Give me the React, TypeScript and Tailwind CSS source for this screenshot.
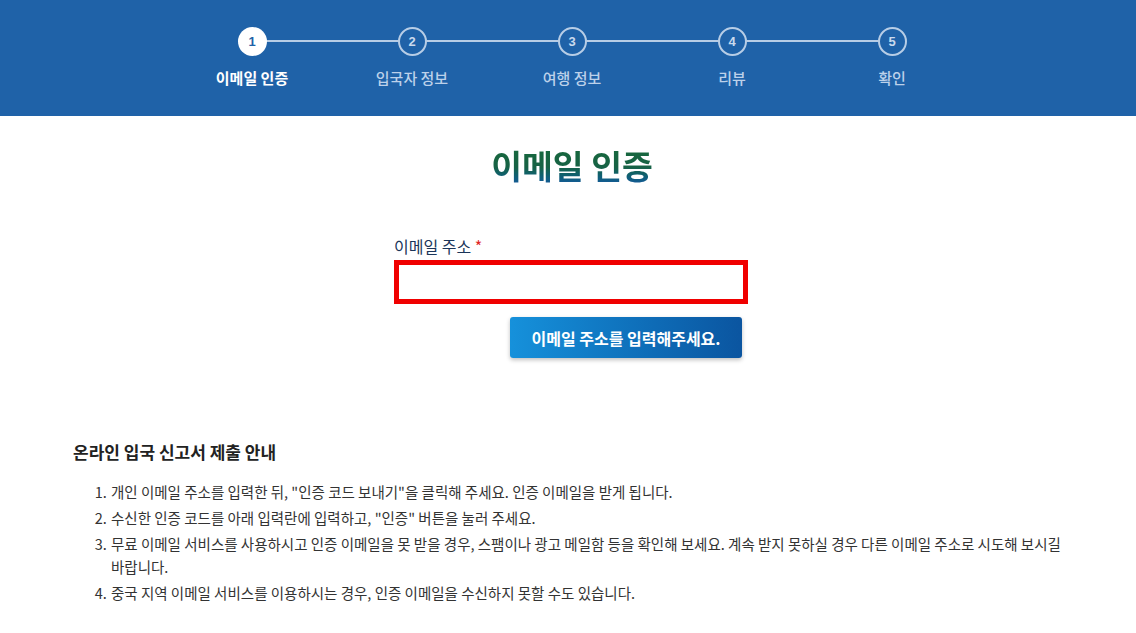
import React from "react";

const steps = ["이메일 인증", "입국자 정보", "여행 정보", "리뷰", "확인"];

const items = [
  '개인 이메일 주소를 입력한 뒤, "인증 코드 보내기"을 클릭해 주세요. 인증 이메일을 받게 됩니다.',
  '수신한 인증 코드를 아래 입력란에 입력하고, "인증" 버튼을 눌러 주세요.',
  "무료 이메일 서비스를 사용하시고 인증 이메일을 못 받을 경우, 스팸이나 광고 메일함 등을 확인해 보세요. 계속 받지 못하실 경우 다른 이메일 주소로 시도해 보시길 바랍니다.",
  "중국 지역 이메일 서비스를 이용하시는 경우, 인증 이메일을 수신하지 못할 수도 있습니다.",
];

export default function App() {
  return (
    <div
      className="w-[1136px] h-[633px] bg-white overflow-hidden"
      style={{ fontFamily: '"Noto Sans CJK KR", "Noto Sans", sans-serif' }}
    >
      <header className="h-[116px] bg-[#1f62a8] flex justify-center pl-[8px]">
        <div className="flex pt-[27px]">
          {steps.map((s, i) => (
            <div key={s} className="relative w-[160px] flex flex-col items-center">
              {i < steps.length - 1 && (
                <div className="absolute top-[13px] left-[80px] w-[160px] h-[2px] bg-[#b7cde6]" />
              )}
              <div
                className={
                  i === 0
                    ? "relative z-10 w-[29px] h-[29px] rounded-full bg-white text-[#1f62a8] flex items-center justify-center text-[13px] font-bold"
                    : "relative z-10 w-[29px] h-[29px] rounded-full bg-[#1f62a8] border-2 border-[#b7cde6] text-[#c9daee] flex items-center justify-center text-[13px] font-bold"
                }
                style={{ fontFamily: '"Liberation Sans", sans-serif' }}
              >
                {i + 1}
              </div>
              <div
                className={
                  i === 0
                    ? "mt-[11px] text-[15px] font-bold text-white leading-[22px]"
                    : "mt-[11px] text-[15px] font-medium text-[#bcd1ea] leading-[22px]"
                }
              >
                {s}
              </div>
            </div>
          ))}
        </div>
      </header>

      <main className="flex flex-col items-center">
        <h1 className="mt-[27px] ml-[8px] text-[33.5px] font-bold leading-[44px] bg-gradient-to-b from-[#17693a] via-[#176245] via-55% to-[#1a55a8] bg-clip-text text-transparent">
          이메일 인증
        </h1>

        <div className="mt-[49px] ml-[6px] w-[354px] flex flex-col">
          <label className="text-[16px] text-[#1b3559] leading-[20px]">
            이메일 주소 <span className="text-[#e0261f]">*</span>
          </label>
          <div className="mt-[4px] h-[44px] border-[5px] border-[#f00000] bg-white" />
          <div className="flex justify-end pr-[6px] mt-[13px]">
            <button className="h-[41px] w-[232px] rounded-[3px] bg-gradient-to-r from-[#1691db] to-[#0b55a0] text-white font-bold text-[16px] shadow-[0_2px_4px_rgba(0,0,0,0.25)]">
              이메일 주소를 입력해주세요.
            </button>
          </div>
        </div>
      </main>

      <section className="mt-[82px] pl-[73px] pr-[70px]">
        <h2 className="text-[17px] font-bold text-[#222] leading-[24px]">온라인 입국 신고서 제출 안내</h2>
        <ol className="mt-[16px] pl-[37px] list-decimal text-[14.5px] text-[#333] leading-[23px]">
          {items.map((t) => (
            <li key={t} className="mb-[3px] pl-[1px]">
              {t}
            </li>
          ))}
        </ol>
      </section>
    </div>
  );
}
